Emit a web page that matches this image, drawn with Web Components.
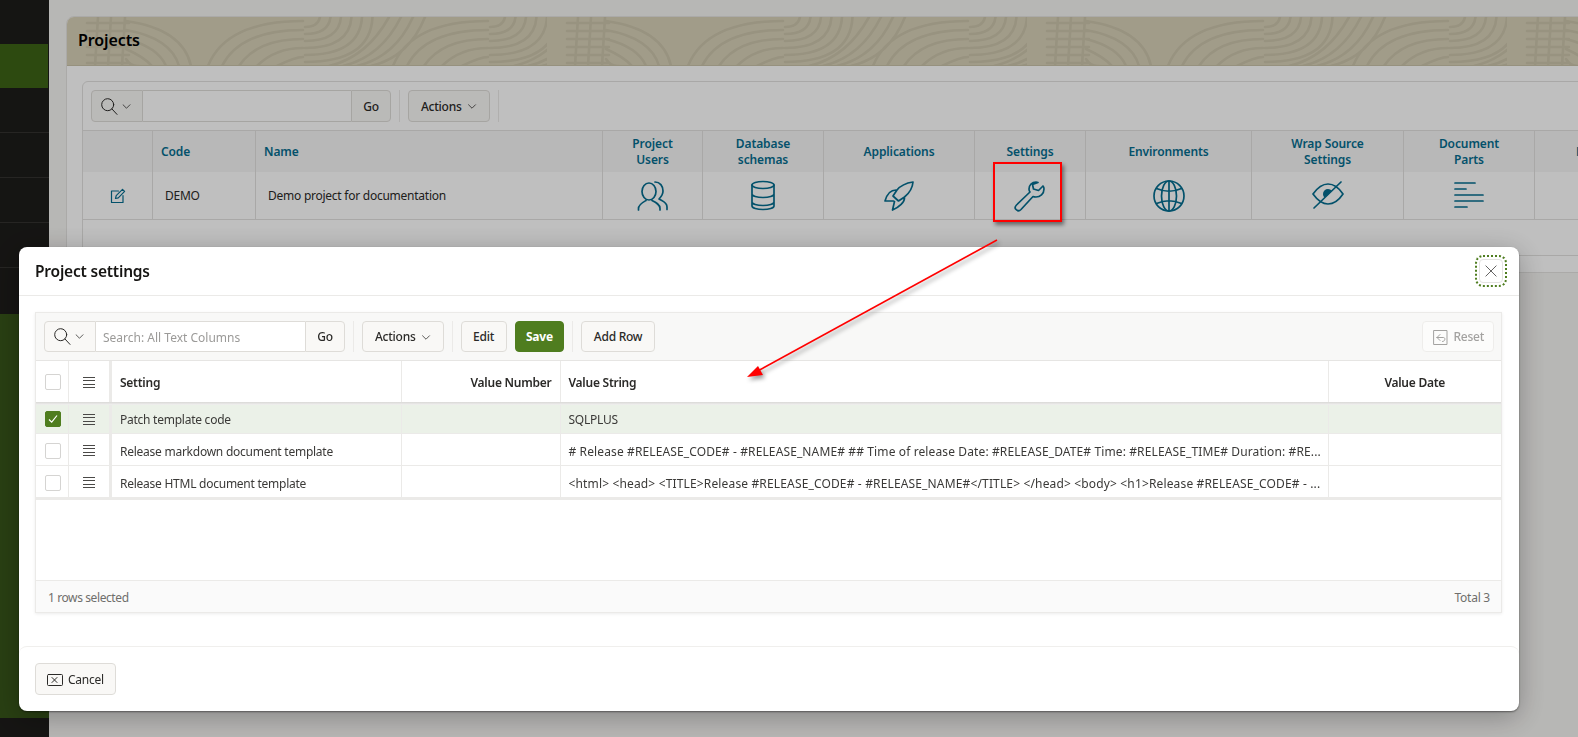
<!DOCTYPE html>
<html lang="en"><head><meta charset="utf-8"><title>Projects</title>
<style>
html,body{margin:0;height:737px;overflow:hidden;background:#f5f4f2}
body{font:12px/16px "Noto Sans","Open Sans",sans-serif;color:#2b2a28;letter-spacing:-.25px}
</style></head>
<body>
<app-page></app-page>
<script>
const ICONS={
 search:'<circle cx="6.7" cy="6.7" r="6"/><path d="M11 11l5 5.4"/>',
 chevron:'<path d="M1 1l4.5 4.5L10 1"/>',
 users:'<ellipse cx="12" cy="11.5" rx="7" ry="8.5"/><path d="M1.500 30v-1.500c0-4 4-6 7.500-8M15 20.500c4 2 8 4 8 8V30M18 2c5 0 8 4 8 9 0 4-2 6-4 8 3 2 8 3 8 8v2.500"/>',
 db:'<ellipse cx="16" cy="5" rx="11" ry="3.500"/><path d="M5 5v21c0 2 5 3.500 11 3.500s11-1.500 11-3.500V5M5 14c0 2 5 3.500 11 3.500s11-1.500 11-3.500M5 22c0 2 5 3.500 11 3.500s11-1.500 11-3.500"/>',
 rocket:'<path d="M30 2c-7 1-12 3-16 8l-4 6 5.500 5 6-4c5-4 8-9 8.500-15zM13 10C8 10 4 14 2 21h8.500M21.500 18c0 4-5 9-12 12l2-8.500"/>',
 wrench:'<path d="M22 2c-4 0-7 3-7 7 0 1 0 2 1 3L2.500 25c-2 2-1.500 3.500-.5 4.500s3 2 5 0L19 16.500c1 .5 2 .5 3 .5 4 0 8-3 8-8 0-1 0-2-1-3l-4.500 4.500-5-1.500-1-4.500L24 2.500c-1-.5-1.500-.5-2-.5z"/>',
 globe:'<circle cx="16" cy="16" r="15"/><ellipse cx="16" cy="16" rx="7.500" ry="15"/><path d="M16 1v30M3.500 8.500Q16 14 28.500 8.500M3.500 23.500Q16 18 28.500 23.500"/>',
 eye:'<path d="M1 14C6 7 11 4 16 4c5 0 11 4 15 10-4 6-10 10-15 10C11 24 6 21 1 14z"/><path d="M2 28L29 2" /><path d="M16 9a5 5 0 0 0-5 5c0 1.500.5 2.500 1.500 3.500L20 11c-1-1.300-2.500-2-4-2z" fill="currentColor" stroke="none"/>',
 lines:'<path d="M1 2h20M1 8h11M1 14h28M1 20h28M1 26h12"/>',
 edit:'<path d="M8.500 3H1.500v11.500H13V7.500"/><path d="M5.500 10.500l.7-2.800L12.500 1.300l2.100 2.100-6.300 6.400z"/>',
 close:'<path d="M1 1l12 12M13 1L1 13"/>',
 reset:'<path d="M2 1.500h13v14H2zM5 8.500h6.500c2 0 2 4-1 4M5 8.500l3-3M5 8.500l3 3"/>',
 cancel:'<rect x=".5" y=".5" width="15" height="11" rx="1"/><path d="M5 3.500l5 5M10 3.500l-5 5"/>'
};
function def(name,html,init){
  const t=document.createElement('template');t.innerHTML=html;
  customElements.define(name,class extends HTMLElement{
    connectedCallback(){
      if(this.shadowRoot)return;
      this.attachShadow({mode:'open'}).appendChild(t.content.cloneNode(true));
      if(init)init(this,this.shadowRoot);
    }
  });
}
def('x-icon','<style>:host{display:inline-flex;flex:none}svg{display:block;width:100%;height:100%;fill:none;stroke:currentColor;stroke-width:var(--sw,1.700);stroke-linecap:round;stroke-linejoin:round}</style><svg></svg>',(h,s)=>{
  const v=h.getAttribute('vb')||'0 0 32 32',svg=s.querySelector('svg');
  svg.setAttribute('viewBox',v);svg.innerHTML=ICONS[h.getAttribute('name')];
});
def('tool-btn',`<style>
:host{display:inline-flex;align-items:center;justify-content:center;gap:5px;box-sizing:border-box;height:var(--h,31px);padding:1px var(--px,11.5px) 0;border:1px solid #dedcd8;border-radius:4px;background:#f9f8f6;color:#2b2a28;font-size:12px;font-weight:500;white-space:nowrap;flex:none}
:host([primary]){background:#4f7d1f;border-color:#4f7d1f;color:#fff;font-weight:700;--px:10.5px}
:host([disabled]){color:#a3a2a0;background:#fcfcfb;border-color:#eeedeb;--px:9px;gap:4px}
</style><slot></slot>`);
def('tool-sep',`<style>:host{display:block;width:1px;height:var(--h,31px);background:#ebeae8;flex:none;margin:0 8px}</style>`);
def('search-bar',`<style>
:host{display:flex;height:var(--h,31px);box-sizing:border-box;flex:none;color:#2b2a28}
.ic{box-sizing:border-box;width:var(--icw,52px);display:flex;align-items:center;gap:4px;padding-left:9px;border:1px solid #dedcd8;border-radius:4px 0 0 4px;background:#f9f8f6}
.in{box-sizing:border-box;width:var(--inw,208px);border:1px solid #dedcd8;border-width:1px 0;background:#fff;padding:1px 7px 0;line-height:29px;color:#9b9a98;white-space:nowrap;letter-spacing:0}
.go{box-sizing:border-box;width:var(--gow,40px);padding-top:1px;border:1px solid #dedcd8;border-radius:0 4px 4px 0;background:#f9f8f6;display:flex;align-items:center;justify-content:center;font-weight:500}
x-icon.s{width:17px;height:17px;--sw:1}x-icon.c{width:9px;height:5px;--sw:1}
</style><div class="ic"><x-icon class="s" name="search" vb="0 0 17 17"></x-icon><x-icon class="c" name="chevron" vb="0 0 11 6.500"></x-icon></div><div class="in"><slot></slot></div><div class="go">Go</div>`);
def('actions-btn',`<style>:host{display:inline-flex;--px:12px}x-icon{width:10px;height:5px;--sw:1}</style><tool-btn>Actions<x-icon name="chevron" vb="0 0 11 6.500"></x-icon></tool-btn>`);
def('side-nav',`<style>
:host{display:flex;flex-direction:column;width:49px;flex:none;background:#1d1c1a;height:737px}
.i{height:44px;border-bottom:1px solid #33322f;flex:none}
.a{background:#3d6316;border:0;height:44px;margin-right:1px;flex:none}
.top{height:44px;flex:none}.gap{height:46px;flex:none}
.g{height:404px;background:#375519;flex:none}
</style><div class="top"></div><div class="a"></div><div class="i"></div><div class="i"></div><div class="i"></div><div class="i"></div><div class="gap"></div><div class="g"></div>`);
def('banner-art',`<style>:host{display:block;position:absolute;inset:0;overflow:hidden;color:#cbc4ab}svg{display:block;width:100%;height:100%}</style><svg xmlns="http://www.w3.org/2000/svg"><defs><pattern id="p" width="480" height="49" patternUnits="userSpaceOnUse"><path id="d" fill="none" stroke="currentColor" stroke-width="2.600" stroke-linecap="round"/></pattern></defs><rect width="100%" height="100%" fill="url(#p)"/></svg>`,(h,s)=>{
  let d='';
  // lattice
  [31,44,58].forEach(x=>{d+=`M${x} 0L${x-3} 49`});
  for(let y=6;y<49;y+=8)d+=`M20 ${y}L62 ${y}`;
  [[4,124],[13,112],[22,99],[32,85],[42,72]].forEach(([y,e])=>{d+=`M59 ${y}Q${e-8} ${y+8} ${e} 49`});
  // wood grain, repeated twice
  [0,185].forEach((o,k)=>{
    [[141,4],[155,13],[172,22],[190,31],[210,40]].forEach(([x,y])=>{d+=`M${x+o} 49Q${x+o+18} ${y} ${236+o} ${y}`});
    [10,17,24,31,38,45].forEach(y=>{const e=238+y*1.5;d+=`M${238+o} ${y}Q${e-2+o} ${y} ${e+o} 0`});
    [0,1,2,3].slice(0,k?3:4).forEach(i=>{d+=`M${262+i*14+o} 49Q${300+i*14+o} 40 ${322+i*12+o} 0`});
  });
  s.getElementById('d').setAttribute('d',d);
});
def('project-panel',`<style>
:host{display:block;width:1700px;height:257px;box-sizing:border-box;background:#fff;border:1px solid #e4e3e1;border-radius:8px 8px 0 0;flex:none}
.hd{position:relative;height:48px;background:#d7d0b7;border-radius:7px 7px 0 0;border-bottom:1px solid #c9c2a9}
h2{position:relative;margin:0;padding:0 11px;font-size:16px;line-height:47px;font-weight:600;color:#000;letter-spacing:-.1px}
.bd{padding:15px 15px 0}
.rg{border:1px solid #e2e1df;border-radius:6px;height:175px;box-sizing:border-box}
.tb{display:flex;padding:8px 8px 0;box-sizing:border-box;--h:32px;border-bottom:1px solid #e2e1df;height:49px}
.r{display:grid;grid-template-columns:70px 103px 347px 100px 121px 151px 111px 166px 152px 131px 118px}
.r>*{box-sizing:border-box;border-right:1px solid #e2e1df;border-bottom:1px solid #e2e1df;display:flex;align-items:center;min-width:0}
.h>*{height:41px;background:#f6f6f6;color:#056d8f;font-weight:600;border-bottom:0;justify-content:center;text-align:center;line-height:16px;letter-spacing:-.1px}
.h>.l{justify-content:flex-start;padding-left:8px;text-align:left}
.b>*{height:48px;justify-content:center;color:#056d8f}
.b>.t{justify-content:flex-start;color:#2b2a28;padding-left:12px;font-weight:400}
x-icon.big{width:32px;height:32px}
.last{justify-content:flex-start!important;padding-left:41px;white-space:nowrap}
</style>
<div class="hd"><banner-art></banner-art><h2>Projects</h2></div>
<div class="bd"><div class="rg">
<div class="tb"><search-bar></search-bar><tool-sep></tool-sep><actions-btn></actions-btn><tool-sep></tool-sep></div>
<div class="r h"><div></div><div class="l">Code</div><div class="l">Name</div><div>Project<br>Users</div><div>Database<br>schemas</div><div>Applications</div><div>Settings</div><div>Environments</div><div>Wrap Source<br>Settings</div><div>Document<br>Parts</div><div class="last">P</div></div>
<div class="r b"><div><x-icon name="edit" vb="0 0 16 16" style="width:16px;height:16px;--sw:1.200"></x-icon></div><div class="t">DEMO</div><div class="t">Demo project for documentation</div>
<div><x-icon class="big" name="users"></x-icon></div><div><x-icon class="big" name="db"></x-icon></div><div><x-icon class="big" name="rocket"></x-icon></div><div><x-icon class="big" name="wrench"></x-icon></div><div><x-icon class="big" name="globe"></x-icon></div><div><x-icon class="big" name="eye"></x-icon></div><div><x-icon class="big" name="lines" vb="-1 -1 32 32"></x-icon></div><div></div></div>
</div></div>`);
def('grid-check',`<style>:host{display:block;width:16px;height:16px;box-sizing:border-box;border:1px solid #d5d4d2;border-radius:2px;background:#fff;flex:none}
:host([on]){background:#4f7d1f;border-color:#4f7d1f}svg{display:none;width:100%;height:100%;fill:none;stroke:#fff;stroke-width:1.200}:host([on]) svg{display:block}</style><svg viewBox="0 0 14 14"><path d="M3 7.500l2.700 2.700L11 3.500"/></svg>`);
def('grid-handle',`<style>:host{display:block;width:12px;height:11px;flex:none;background:repeating-linear-gradient(#4a4947 0 1px,transparent 1px 3.330px)}</style>`);
def('grid-row',`<style>
:host{display:grid;grid-template-columns:33px 40px 3px 289.500px 159px 768px 172.500px;height:32px;box-sizing:border-box;--c:#fff;color:#3a3937;--tp:4px;--ip:2px}
:host([selected]){--c:#ebf1e8;--tp:1px;--ip:0px}
:host([head]){height:41px;--tp:2px;--ip:1px}
.c{box-sizing:border-box;background:var(--c);border-bottom:1px solid #ebeae8;border-right:1px solid #ebeae8;display:flex;align-items:center;padding:var(--tp) 8px 0;overflow:hidden;white-space:nowrap;min-width:0}
.ck{padding:var(--ip) 0 0 9px}.dr{padding:var(--ip) 0 0 14px;border-right:0}
.gut{background:#ebeae8;display:block;padding:0;border:0}
:host([head]) .c{background:#fff;font-weight:600;color:#2b2a28;border-bottom:0}
:host([head]) .gut{background:#ebeae8}
.num{justify-content:flex-end}
.dt{justify-content:center;border-right:0}
</style>
<div class="c ck"><grid-check></grid-check></div><div class="c dr"><grid-handle></grid-handle></div><div class="gut"></div>
<div class="c"><slot name="a"></slot></div><div class="c num"><slot name="b"></slot></div><div class="c"><slot name="d"></slot></div><div class="c dt"><slot name="e"></slot></div>`,(h,s)=>{
  if(h.hasAttribute('selected'))s.querySelector('grid-check').setAttribute('on','');
});
def('settings-grid',`<style>
:host{display:flex;flex-direction:column;box-sizing:border-box;width:1467px;height:301px;border:1px solid #ebeae8;box-shadow:0 1px 3px rgba(0,0,0,.08);flex:none;background:#fff}
.tb{display:flex;box-sizing:border-box;height:48px;padding:8px 7px 0 8px;background:#f8f8f7;border-bottom:1px solid #e6e5e3;--icw:52px;--inw:209px;--gow:40px}
.tb tool-btn+tool-btn{margin-left:8px}
.sp{flex:1}
.bl{flex:1}
.ph{height:3px;background:linear-gradient(#d9d8d6,#f1f1f0);flex:none}
.end{height:2px;background:#ebeae8;flex:none}
.ft{height:32px;box-sizing:border-box;background:#fafafa;border-top:1px solid #ebeae8;display:flex;justify-content:space-between;align-items:center;padding:2px 11px 0 12px;color:#6f6e6c;flex:none}
.ft span:first-child{letter-spacing:-.4px}
.v2{letter-spacing:.12px}.v3{letter-spacing:.15px}
x-icon{width:17px;height:17px;--sw:1}
</style>
<div class="tb"><search-bar>Search: All Text Columns</search-bar><tool-sep></tool-sep><actions-btn></actions-btn><tool-sep></tool-sep><tool-btn>Edit</tool-btn><tool-btn primary>Save</tool-btn><tool-sep></tool-sep><tool-btn>Add Row</tool-btn><div class="sp"></div><tool-btn disabled><x-icon name="reset" vb="0 0 17 17"></x-icon>Reset</tool-btn></div>
<grid-row head style="height:41px"><span slot="a">Setting</span><span slot="b">Value Number</span><span slot="d">Value String</span><span slot="e">Value Date</span></grid-row>
<div class="ph"></div>
<grid-row selected style="height:29px"><span slot="a">Patch template code</span><span slot="d">SQLPLUS</span></grid-row>
<grid-row><span slot="a">Release markdown document template</span><span slot="d" class="v2"># Release #RELEASE_CODE# - #RELEASE_NAME# ## Time of release Date: #RELEASE_DATE# Time: #RELEASE_TIME# Duration: #RE...</span></grid-row>
<grid-row><span slot="a">Release HTML document template</span><span slot="d" class="v3">&lt;html&gt; &lt;head&gt; &lt;TITLE&gt;Release #RELEASE_CODE# - #RELEASE_NAME#&lt;/TITLE&gt; &lt;/head&gt; &lt;body&gt; &lt;h1&gt;Release #RELEASE_CODE# - ...</span></grid-row>
<div class="end"></div><div class="bl"></div>
<div class="ft"><span>1 rows selected</span><span>Total 3</span></div>`);
def('modal-dialog',`<style>
:host{display:flex;flex-direction:column;position:fixed;left:19px;top:247px;width:1500px;height:464px;background:#fff;border-radius:8px;box-shadow:0 1px 2px rgba(0,0,0,.45),0 6px 28px rgba(0,0,0,.28)}
.hd{height:49px;box-sizing:border-box;border-bottom:1px solid #ebeae8;display:flex;align-items:center;justify-content:space-between;padding:0 16px;flex:none;border-radius:8px 8px 0 0}
h2{margin:0;font-size:15.500px;font-weight:600;color:#161513;letter-spacing:-.2px}
.x{box-sizing:border-box;width:24px;height:24px;border:1px solid #e4e3e1;border-radius:4px;display:flex;align-items:center;justify-content:center;outline:2px dotted #4f7d1f;outline-offset:2px;color:#4a4947}
.x x-icon{width:12px;height:12px;--sw:1}
.bd{padding:16px 16px 0;height:350px;box-sizing:border-box;flex:none}
.ft{border-top:1px solid #f0efed;flex:1;padding:16px;border-radius:8px}
.cn{--h:32px;--px:11px;font-weight:400}x-icon.cc{width:16px;height:12px;--sw:1}
</style><div class="hd"><h2>Project settings</h2><div class="x"><x-icon name="close" vb="0 0 14 14"></x-icon></div></div>
<div class="bd"><settings-grid></settings-grid></div>
<div class="ft"><tool-btn class="cn"><x-icon class="cc" name="cancel" vb="0 0 16 12"></x-icon>Cancel</tool-btn></div>`);
def('annotation-layer',`<style>
:host{position:fixed;inset:0;display:block;pointer-events:none}
.box{position:absolute;left:993px;top:162px;width:69px;height:60px;box-sizing:border-box;border:2px solid #f00;box-shadow:2px 3px 4px rgba(0,0,0,.45)}
svg{position:absolute;inset:0;width:100%;height:100%;filter:drop-shadow(2px 3px 2px rgba(0,0,0,.4))}
</style><div class="box"></div><svg viewBox="0 0 1578 737"><path d="M997 240L754 373" stroke="#f00" stroke-width="1.500" fill="none"/><path d="M747 377L758 366L763 375z" fill="#f00"/></svg>`);
def('app-page',`<style>
:host{display:flex;width:1578px;height:737px;overflow:hidden;position:relative}
.main{flex:1;padding:16px 0 0 17px;min-width:0;overflow:hidden}
.scrim{position:fixed;inset:0;background:rgba(0,0,0,.25)}
</style><side-nav></side-nav><div class="main"><project-panel></project-panel></div><div class="scrim"></div><modal-dialog></modal-dialog><annotation-layer></annotation-layer>`);
</script>
</body></html>
